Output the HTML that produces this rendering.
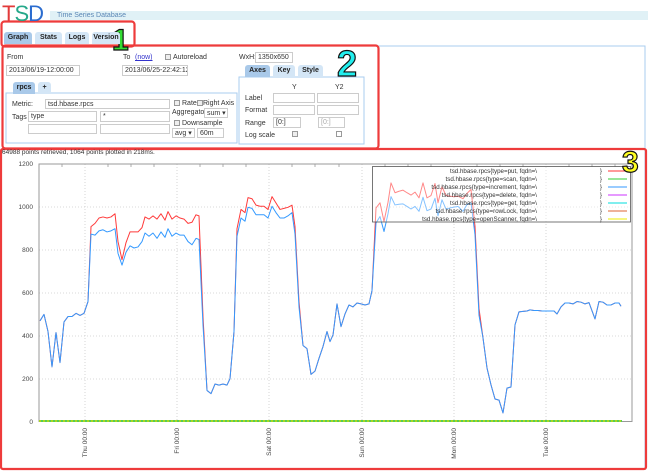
<!DOCTYPE html>
<html><head><meta charset="utf-8"><style>
*{margin:0;padding:0;box-sizing:border-box}
body{width:648px;height:472px;background:#fff;position:relative;overflow:hidden;font-family:"Liberation Sans",sans-serif;font-size:7px;color:#333}
.a{position:absolute;white-space:nowrap}
.in{position:absolute;border:1px solid #ccc;background:#fff;font-size:7px;padding-left:2px;line-height:9px;color:#333;white-space:nowrap;overflow:hidden}
.cb{position:absolute;width:6px;height:6px;border:1px solid #999;background:#eee}
.tab{position:absolute;background:#d4e6f6;border-radius:3px 3px 0 0;font-weight:bold;font-size:7px;text-align:center;color:#222}
.tab.on{background:#a9c9e9}
</style></head><body>
<svg class="a" style="left:0;top:0" width="648" height="472">
<rect x="50" y="11" width="598" height="9" fill="#e0f1f6"/>
<path d="M3 147 V46 H645 V470" fill="none" stroke="#a9ccef" stroke-width="1"/>
<rect x="6" y="93" width="231" height="50" fill="none" stroke="#a9ccef"/>
<rect x="239" y="77" width="125" height="67" fill="none" stroke="#a9ccef"/>
<g stroke="#ccc" stroke-dasharray="1,2" stroke-width="0.8">
<line x1="85" y1="164" x2="85" y2="421"/><line x1="177" y1="164" x2="177" y2="421"/><line x1="269" y1="164" x2="269" y2="421"/><line x1="362" y1="164" x2="362" y2="421"/><line x1="454" y1="164" x2="454" y2="421"/><line x1="546" y1="164" x2="546" y2="421"/>
<line x1="39" y1="207" x2="632" y2="207"/><line x1="39" y1="250" x2="632" y2="250"/><line x1="39" y1="293" x2="632" y2="293"/><line x1="39" y1="336" x2="632" y2="336"/><line x1="39" y1="379" x2="632" y2="379"/>
</g>
<rect x="39" y="164" width="593" height="257.5" fill="none" stroke="#999" stroke-width="1"/>
<g stroke="#999" stroke-width="0.8">
<path d="M62 164v3M108 164v3M131 164v3M154 164v3M200 164v3M223 164v3M246 164v3M292 164v3M315 164v3M339 164v3M385 164v3M408 164v3M431 164v3M477 164v3M500 164v3M523 164v3M569 164v3M592 164v3M615 164v3"/>
</g>
<g transform="translate(0,421.5) scale(1,-0.2142)" fill="none" stroke-linejoin="round">
<polyline vector-effect="non-scaling-stroke" stroke="#ff3a3a" stroke-width="1" points="40,470 44,500 48,420 52,255 56,415 60,275 64,465 68,490 72,490 76,505 80,495 84,505 88,560 91,910 95,925 99,950 103,955 107,950 111,955 115,970 118,840 122,755 126,835 130,885 134,885 138,885 142,905 145,955 149,945 153,960 157,945 161,970 165,940 168,980 172,945 176,960 180,950 184,945 188,925 192,930 196,965 199,960 203,490 207,145 211,130 215,175 219,170 223,175 227,170 230,200 234,420 237,900 241,990 245,975 248,1045 252,1040 256,1010 260,1005 264,1005 268,990 272,1050 276,1020 280,990 284,995 288,1000 292,1010 295,910 299,560 303,355 307,340 311,220 315,235 319,295 323,350 327,420 330,373 333,404 337,549 341,443 345,502 349,544 353,535 357,553 361,549 365,544 369,549 372,611 376,997 380,1021 384,934 388,1023 391,1114 395,1068 399,1075 403,1080 407,1068 411,1057 415,1071 419,1044 423,1114 427,1044 431,1055 435,1111 438,1021 442,1096 446,1055 450,1052 454,1049 458,1052 463,1040 467,1065 471,1083 475,911 479,527 483,390 487,250 491,171 495,105 499,100 503,40 507,156 511,161 515,451 519,512 523,514 527,516 530,521 534,518 538,518 542,516 546,516 550,516 554,516 557,502 561,535 565,553 569,553 573,549 577,560 581,557 585,549 589,555 595,479 599,560 603,557 607,544 611,544 615,553 619,553 621,538"/>
<polyline vector-effect="non-scaling-stroke" stroke="#3399ff" stroke-width="1" points="40,470 44,500 48,420 52,255 56,415 60,275 64,465 68,490 72,490 76,505 80,495 84,505 88,560 91,875 95,870 99,890 103,895 107,885 111,890 115,900 118,785 122,730 126,790 130,820 134,810 138,815 142,840 145,880 149,865 153,880 157,855 161,885 165,860 168,900 172,865 176,880 180,870 184,870 188,840 192,825 196,855 199,850 203,450 207,145 211,130 215,175 219,170 223,175 227,170 230,200 234,420 237,865 241,950 245,935 248,1000 252,995 256,965 260,965 264,965 268,950 272,1005 276,975 280,950 284,950 288,960 292,975 295,875 299,535 303,355 307,340 311,220 315,235 319,295 323,350 327,420 330,373 333,404 337,549 341,443 345,502 349,544 353,535 357,553 361,549 365,544 369,549 372,611 376,927 380,957 384,887 388,970 391,1050 395,1011 399,1014 403,1016 407,1004 411,992 415,1004 419,981 423,1047 427,984 431,992 435,1042 438,960 442,1035 446,992 450,997 454,1001 458,1004 463,981 467,1013 471,1021 475,872 479,496 483,390 487,250 491,171 495,105 499,100 503,40 507,156 511,161 515,451 519,512 523,514 527,516 530,521 534,518 538,518 542,516 546,516 550,516 554,516 557,502 561,535 565,553 569,553 573,549 577,560 581,557 585,549 589,555 595,479 599,560 603,557 607,544 611,544 615,553 619,553 621,538"/>
</g>
<line x1="39" y1="421" x2="622" y2="421" stroke="#5c5" stroke-width="2"/>
<line x1="39" y1="421" x2="622" y2="421" stroke="#dd0" stroke-width="1.2" stroke-dasharray="2,2"/>
<rect x="372.5" y="166.5" width="258" height="55.5" fill="#fff" fill-opacity="0.4" stroke="#555" stroke-width="0.8"/>
<g font-family="Liberation Sans,sans-serif" font-size="6.2" fill="#333" text-anchor="end">
<text x="537" y="173">tsd.hbase.rpcs{type=put, fqdn=\</text>
<text x="537" y="181">tsd.hbase.rpcs{type=scan, fqdn=\</text>
<text x="537" y="189">tsd.hbase.rpcs{type=increment, fqdn=\</text>
<text x="537" y="197">tsd.hbase.rpcs{type=delete, fqdn=\</text>
<text x="537" y="205">tsd.hbase.rpcs{type=get, fqdn=\</text>
<text x="537" y="213">tsd.hbase.rpcs{type=rowLock, fqdn=\</text>
<text x="537" y="221">tsd.hbase.rpcs{type=openScanner, fqdn=\</text>
<text x="602" y="173">}</text><text x="602" y="181">}</text><text x="602" y="189">}</text><text x="602" y="197">}</text><text x="602" y="205">}</text><text x="602" y="213">}</text><text x="602" y="221">}</text>
</g>
<g stroke-width="1">
<line x1="608" y1="171" x2="627" y2="171" stroke="#f33"/><line x1="608" y1="179" x2="627" y2="179" stroke="#3c3"/><line x1="608" y1="187" x2="627" y2="187" stroke="#39f"/><line x1="608" y1="195" x2="627" y2="195" stroke="#c3f"/><line x1="608" y1="203" x2="627" y2="203" stroke="#0dd"/><line x1="608" y1="211" x2="627" y2="211" stroke="#d63"/><line x1="608" y1="219" x2="627" y2="219" stroke="#ee0"/>
</g>
<g font-family="Liberation Sans,sans-serif" font-size="6.5" fill="#444" text-anchor="end">
<text x="33" y="166">1200</text><text x="33" y="209">1000</text><text x="33" y="252">800</text><text x="33" y="295">600</text><text x="33" y="338">400</text><text x="33" y="381">200</text><text x="33" y="424">0</text>
</g>
<g font-family="Liberation Sans,sans-serif" font-size="6.5" fill="#444" text-anchor="end">
<text transform="translate(87,428) rotate(-90)">Thu 00:00</text>
<text transform="translate(179,428) rotate(-90)">Fri 00:00</text>
<text transform="translate(271,428) rotate(-90)">Sat 00:00</text>
<text transform="translate(364,428) rotate(-90)">Sun 00:00</text>
<text transform="translate(456,428) rotate(-90)">Mon 00:00</text>
<text transform="translate(548,428) rotate(-90)">Tue 00:00</text>
</g>
<rect x="1.5" y="21.5" width="133" height="25" rx="3" fill="none" stroke="#ee3b3b" stroke-width="2.2"/>
<rect x="2.5" y="45.5" width="376" height="103" rx="3" fill="none" stroke="#ee3b3b" stroke-width="2.2"/>
<rect x="1" y="149" width="645" height="320" rx="2" fill="none" stroke="#ee3b3b" stroke-width="2.2"/>
<g font-family="Liberation Sans,sans-serif" font-weight="bold" stroke="#111" stroke-width="1.2">
<text x="112" y="50" font-size="30" fill="#3d3">1</text>
<text x="337" y="76" font-size="36" fill="#2ee">2</text>
<text x="622" y="172" font-size="30" fill="#ff2">3</text>
</g>
</svg>

<div class="a" style="left:2px;top:3px;font-size:22px;line-height:22px;letter-spacing:-1px"><span style="color:#e23a3a">T</span><span style="color:#25a88a">S</span><span style="color:#2b6ccf">D</span></div>
<div class="a" style="left:57px;top:12px;font-size:7px;color:#5a86b5">Time Series Database</div>

<div class="tab on" style="left:4px;top:32px;width:28px;height:12px;line-height:12px">Graph</div>
<div class="tab" style="left:35px;top:32px;width:27px;height:12px;line-height:12px">Stats</div>
<div class="tab" style="left:65px;top:32px;width:24px;height:12px;line-height:12px">Logs</div>
<div class="tab" style="left:92px;top:32px;width:28px;height:12px;line-height:12px">Version</div>

<div class="a" style="left:7px;top:54px">From</div>
<div class="a" style="left:123px;top:54px">To</div>
<div class="a" style="left:135px;top:54px;color:#33c;text-decoration:underline">(now)</div>
<div class="cb" style="left:165px;top:54px"></div>
<div class="a" style="left:173px;top:54px">Autoreload</div>
<div class="in" style="left:6px;top:65px;width:74px;height:11px">2013/06/19-12:00:00</div>
<div class="in" style="left:122px;top:65px;width:66px;height:11px">2013/06/25-22:42:12</div>
<div class="a" style="left:239px;top:54px">WxH:</div>
<div class="in" style="left:255px;top:52px;width:38px;height:11px">1350x650</div>

<div class="tab on" style="left:245px;top:65px;width:25px;height:12px;line-height:12px">Axes</div>
<div class="tab" style="left:273px;top:65px;width:22px;height:12px;line-height:12px">Key</div>
<div class="tab" style="left:298px;top:65px;width:25px;height:12px;line-height:12px">Style</div>
<div class="a" style="left:292px;top:84px">Y</div>
<div class="a" style="left:335px;top:84px">Y2</div>
<div class="a" style="left:245px;top:95px">Label</div>
<div class="in" style="left:273px;top:93px;width:42px;height:10px"></div>
<div class="in" style="left:317px;top:93px;width:42px;height:10px"></div>
<div class="a" style="left:245px;top:107px">Format</div>
<div class="in" style="left:273px;top:105px;width:42px;height:10px"></div>
<div class="in" style="left:317px;top:105px;width:42px;height:10px"></div>
<div class="a" style="left:245px;top:120px">Range</div>
<div class="in" style="left:273px;top:117px;width:28px;height:11px">[0:]</div>
<div class="in" style="left:318px;top:117px;width:27px;height:11px;color:#aaa">[0:]</div>
<div class="a" style="left:245px;top:132px">Log scale</div>
<div class="cb" style="left:292px;top:131px"></div>
<div class="cb" style="left:336px;top:131px;background:#fff"></div>

<div class="tab on" style="left:13px;top:82px;width:22px;height:12px;line-height:12px">rpcs</div>
<div class="tab" style="left:38px;top:82px;width:13px;height:12px;line-height:12px">+</div>
<div class="a" style="left:12px;top:101px">Metric:</div>
<div class="in" style="left:45px;top:99px;width:125px;height:10px">tsd.hbase.rpcs</div>
<div class="cb" style="left:174px;top:100px"></div>
<div class="a" style="left:182px;top:100px">Rate</div>
<div class="cb" style="left:197px;top:100px"></div>
<div class="a" style="left:203px;top:100px">Right Axis</div>
<div class="a" style="left:12px;top:114px">Tags</div>
<div class="in" style="left:28px;top:111px;width:69px;height:11px">type</div>
<div class="in" style="left:100px;top:111px;width:70px;height:11px">*</div>
<div class="in" style="left:28px;top:124px;width:69px;height:10px"></div>
<div class="in" style="left:100px;top:124px;width:70px;height:10px"></div>
<div class="a" style="left:172px;top:109px">Aggregator:</div>
<div class="in" style="left:204px;top:108px;width:24px;height:10px">sum ▾</div>
<div class="cb" style="left:174px;top:120px"></div>
<div class="a" style="left:182px;top:120px">Downsample</div>
<div class="in" style="left:172px;top:128px;width:23px;height:10px">avg ▾</div>
<div class="in" style="left:197px;top:128px;width:27px;height:10px">60m</div>

<div class="a" style="left:2px;top:149px;font-size:6.5px;color:#333">64988 points retrieved, 1064 points plotted in 218ms.</div>
</body></html>
